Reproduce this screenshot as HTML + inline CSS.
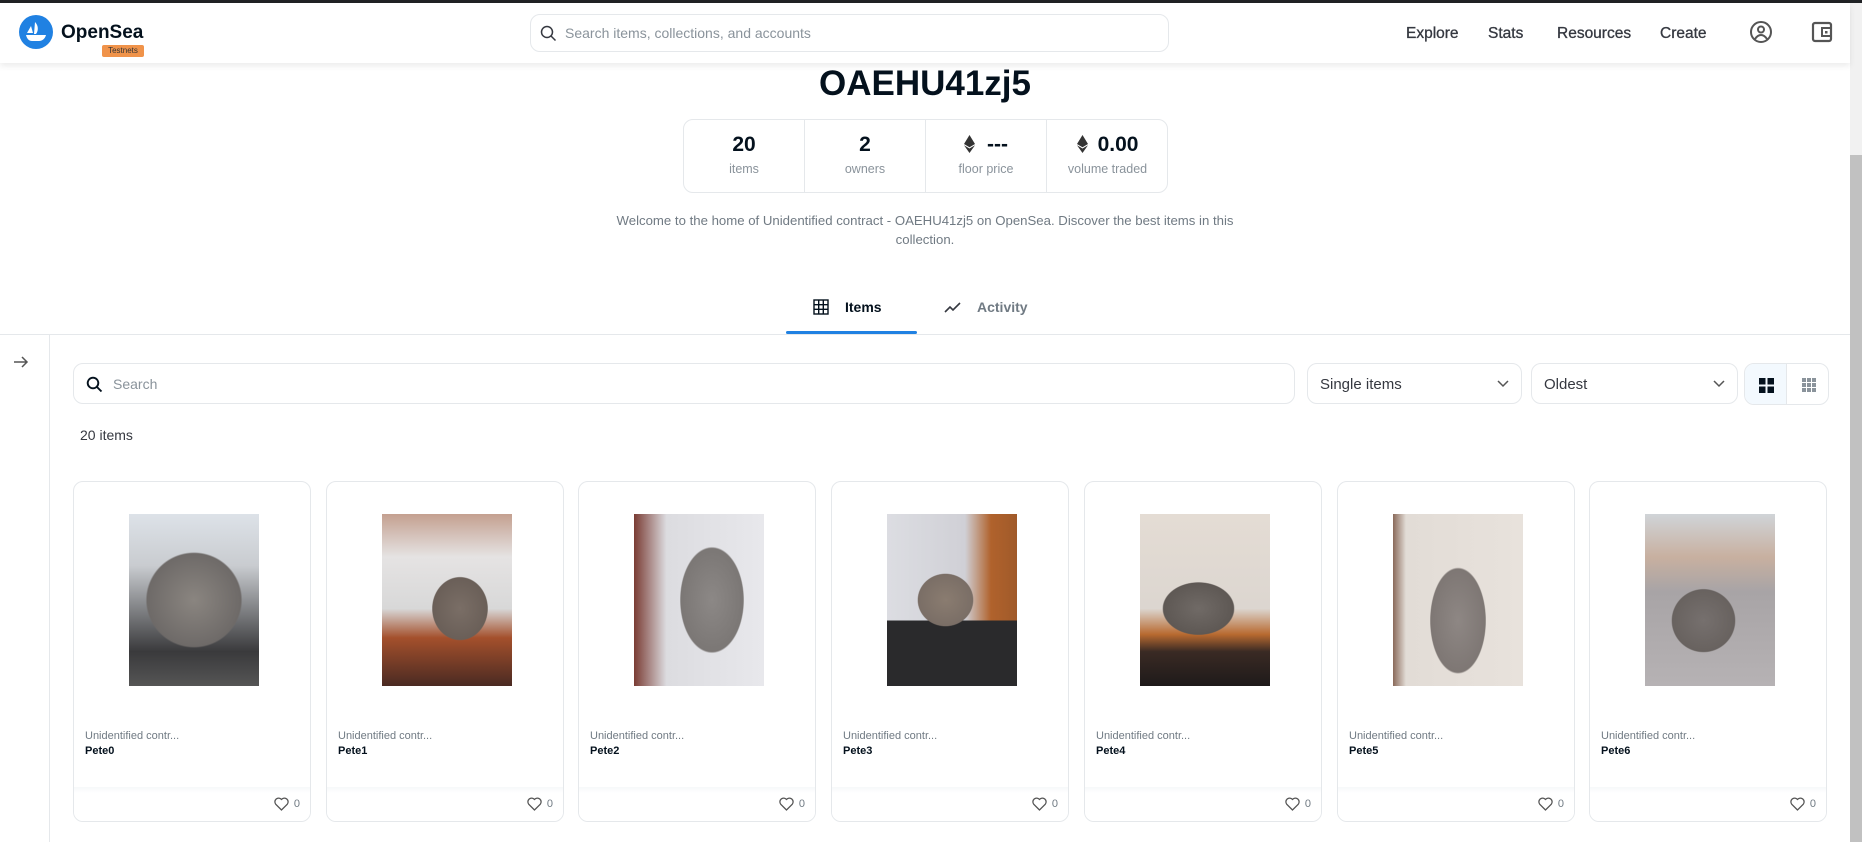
<!DOCTYPE html>
<html><head><meta charset="utf-8">
<style>
*{box-sizing:border-box;margin:0;padding:0}
body{width:1862px;height:842px;overflow:hidden;background:#fff;font-family:"Liberation Sans",sans-serif;color:#04111d;position:relative}
.abs{position:absolute}
#topbar{left:0;top:0;width:1862px;height:3px;background:#202225}
#header{left:0;top:3px;width:1850px;height:60px;background:#fff;box-shadow:0 3px 6px rgba(0,0,0,.08);z-index:2}
.nav{font-size:15.5px;color:#353840;top:22px;-webkit-text-stroke:0.3px #353840}
#scroll{left:1850px;top:3px;width:12px;height:839px;background:#f1f1f1}
#thumb{left:1850px;top:155px;width:12px;height:687px;background:#c1c1c1}
.stat{position:absolute;top:0;width:121px;height:73px;text-align:center;border-right:1px solid #e5e8eb}
.stat b{display:block;font-size:21px;margin-top:13px;color:#04111d}
.stat span{display:block;font-size:12.5px;color:#8a939b;margin-top:5px}
.card{position:absolute;top:481px;width:238px;height:341px;border:1px solid #e5e8eb;border-radius:10px;overflow:hidden;background:#fff}
.card .img{position:absolute;left:55px;top:32px;width:130px;height:172px}
.card .c{position:absolute;left:11px;top:248px;font-size:11px;color:#707a83}
.card .n{position:absolute;left:11px;top:263px;font-size:11px;font-weight:bold;color:#04111d}
.card .f{position:absolute;left:0;top:305px;width:100%;height:36px;background:linear-gradient(#f6f8f9,#fff 6px)}
.card .h{position:absolute;right:10px;top:10px;font-size:11px;color:#707a83;display:flex;align-items:center;gap:5px}
.sel{position:absolute;top:363px;height:41px;border:1px solid #e5e8eb;border-radius:10px;font-size:15px;color:#353840;padding:12px 12px}
</style></head><body>
<div id="topbar" class="abs"></div>
<div id="header" class="abs">
  <svg class="abs" style="left:19px;top:12px" width="34" height="34" viewBox="0 0 34 34"><circle cx="17" cy="17" r="17" fill="#2081e2"/><path d="M8 18l4-7 2 7z" fill="#fff"/><path d="M16 7c3 3 4 8 1 12h-2z" fill="#fff"/><path d="M7 20h20c-1 4-4 6-7 6h-7c-3 0-5-2-6-6z" fill="#fff"/></svg>
  <div class="abs" style="left:61px;top:19px;font-size:19px;font-weight:bold;color:#04111d">OpenSea</div>
  <div class="abs" style="left:102px;top:42px;width:42px;height:12px;background:#f0934a;border-radius:2px;font-size:8px;color:#333;text-align:center;line-height:12px">Testnets</div>
  <div class="abs" style="left:530px;top:11px;width:639px;height:38px;border:1px solid #e5e8eb;border-radius:10px">
    <svg class="abs" style="left:9px;top:10px" width="17" height="17" viewBox="0 0 17 17"><circle cx="7" cy="7" r="5.5" fill="none" stroke="#353840" stroke-width="1.5"/><path d="M11 11l4.5 4.5" stroke="#353840" stroke-width="1.5"/></svg>
    <div class="abs" style="left:34px;top:10px;font-size:14px;color:#8a939b">Search items, collections, and accounts</div>
  </div>
  <div class="abs nav" style="left:1406px">Explore</div>
  <div class="abs nav" style="left:1488px">Stats</div>
  <div class="abs nav" style="left:1557px">Resources</div>
  <div class="abs nav" style="left:1660px">Create</div>
  <svg class="abs" style="left:1749px;top:17px" width="24" height="24" viewBox="0 0 24 24"><circle cx="12" cy="12" r="10" fill="none" stroke="#555" stroke-width="2"/><circle cx="12" cy="9.5" r="3" fill="none" stroke="#555" stroke-width="2"/><path d="M6 19c2-3 4-4 6-4s4 1 6 4" fill="none" stroke="#555" stroke-width="2"/></svg>
  <svg class="abs" style="left:1811px;top:18px" width="22" height="22" viewBox="0 0 22 22"><rect x="2" y="2" width="18" height="18" rx="2" fill="none" stroke="#555" stroke-width="2.2"/><rect x="11" y="7" width="9" height="8" fill="none" stroke="#555" stroke-width="2"/><rect x="14" y="10" width="2.5" height="2.5" fill="#555"/></svg>
</div>
<div id="scroll" class="abs"></div><div id="thumb" class="abs"></div>

<div class="abs" style="left:0;top:64px;width:1850px;text-align:center;font-size:35px;font-weight:bold;color:#04111d">OAEHU41zj5</div>
<div class="abs" style="left:683px;top:119px;width:485px;height:74px;border:1px solid #e5e8eb;border-radius:10px;overflow:hidden">
  <div class="stat" style="left:0"><b>20</b><span>items</span></div>
  <div class="stat" style="left:121px"><b>2</b><span>owners</span></div>
  <div class="stat" style="left:242px"><b><svg width="11" height="18" viewBox="0 0 11 18" style="vertical-align:-2px;margin-right:12px"><path d="M5.5 0L0 9l5.5 3.3L11 9z" fill="#333"/><path d="M0 10.2l5.5 7.8 5.5-7.8-5.5 3.3z" fill="#333"/></svg>---</b><span>floor price</span></div>
  <div class="stat" style="left:363px;border-right:0"><b><svg width="11" height="18" viewBox="0 0 11 18" style="vertical-align:-2px;margin-right:10px"><path d="M5.5 0L0 9l5.5 3.3L11 9z" fill="#333"/><path d="M0 10.2l5.5 7.8 5.5-7.8-5.5 3.3z" fill="#333"/></svg>0.00</b><span>volume traded</span></div>
</div>
<div class="abs" style="left:610px;top:211px;width:630px;text-align:center;font-size:13.2px;line-height:19px;color:#707a83">Welcome to the home of Unidentified contract - OAEHU41zj5 on OpenSea. Discover the best items in this collection.</div>

<svg class="abs" style="left:813px;top:299px" width="16" height="16" viewBox="0 0 16 16" fill="none" stroke="#04111d" stroke-width="1.4"><rect x="1" y="1" width="14" height="14"/><path d="M5.7 1v14M10.3 1v14M1 5.7h14M1 10.3h14"/></svg>
<div class="abs" style="left:845px;top:299px;font-size:14px;font-weight:bold;color:#04111d">Items</div>
<svg class="abs" style="left:944px;top:301px" width="18" height="12" viewBox="0 0 18 12" fill="none" stroke="#353840" stroke-width="1.6"><path d="M1 11l5-5 3 3 7-7"/></svg>
<div class="abs" style="left:977px;top:299px;font-size:14px;font-weight:bold;color:#707a83">Activity</div>
<div class="abs" style="left:786px;top:331px;width:131px;height:3px;background:#2081e2;border-radius:2px"></div>
<div class="abs" style="left:0;top:334px;width:1850px;height:1px;background:#e5e8eb"></div>
<div class="abs" style="left:49px;top:335px;width:1px;height:507px;background:#e5e8eb"></div>
<svg class="abs" style="left:13px;top:355px" width="16" height="14" viewBox="0 0 16 14" fill="none" stroke="#555" stroke-width="1.5"><path d="M1 7h13M9 2l5 5-5 5"/></svg>

<div class="abs" style="left:73px;top:363px;width:1222px;height:41px;border:1px solid #e5e8eb;border-radius:10px">
  <svg class="abs" style="left:12px;top:12px" width="17" height="17" viewBox="0 0 17 17"><circle cx="7" cy="7" r="5.3" fill="none" stroke="#04111d" stroke-width="1.9"/><path d="M11 11l4.5 4.5" stroke="#04111d" stroke-width="1.9"/></svg>
  <div class="abs" style="left:39px;top:12px;font-size:14px;color:#8a939b">Search</div>
</div>
<div class="sel" style="left:1307px;width:215px">Single items<svg class="abs" style="right:12px;top:16px" width="12" height="8" viewBox="0 0 12 8" fill="none" stroke="#555" stroke-width="1.5"><path d="M1 1l5 5 5-5"/></svg></div>
<div class="sel" style="left:1531px;width:207px">Oldest<svg class="abs" style="right:12px;top:16px" width="12" height="8" viewBox="0 0 12 8" fill="none" stroke="#555" stroke-width="1.5"><path d="M1 1l5 5 5-5"/></svg></div>
<div class="abs" style="left:1744px;top:363px;width:85px;height:42px;border:1px solid #e5e8eb;border-radius:10px;overflow:hidden">
  <div class="abs" style="left:0;top:0;width:42px;height:42px;background:#f3f9fe;border-right:1px solid #e5e8eb"></div>
  <svg class="abs" style="left:14px;top:14px" width="15" height="15" viewBox="0 0 15 15" fill="#04111d"><rect width="6.5" height="6.5"/><rect x="8.5" width="6.5" height="6.5"/><rect y="8.5" width="6.5" height="6.5"/><rect x="8.5" y="8.5" width="6.5" height="6.5"/></svg>
  <svg class="abs" style="left:57px;top:14px" width="14" height="14" viewBox="0 0 14 14" fill="#8a939b"><rect width="4" height="4"/><rect x="5" width="4" height="4"/><rect x="10" width="4" height="4"/><rect y="5" width="4" height="4"/><rect x="5" y="5" width="4" height="4"/><rect x="10" y="5" width="4" height="4"/><rect y="10" width="4" height="4"/><rect x="5" y="10" width="4" height="4"/><rect x="10" y="10" width="4" height="4"/></svg>
</div>
<div class="abs" style="left:80px;top:427px;font-size:14px;color:#353840">20 items</div>

<div class="card" style="left:73px"><div class="img" style="background:radial-gradient(ellipse 60% 45% at 50% 50%,#8a8580 0%,#6e6a68 60%,transparent 62%),linear-gradient(#dde2e8 0%,#c9ccd0 30%,#3a3a3c 80%,#555 100%)"></div><div class="c">Unidentified contr...</div><div class="n">Pete0</div><div class="f"><div class="h"><svg width="15" height="14" viewBox="0 0 15 14"><path d="M7.5 13L1.8 7.3A3.4 3.4 0 0 1 7.5 2.4a3.4 3.4 0 0 1 5.7 4.9z" fill="none" stroke="#555" stroke-width="1.3"/></svg><span>0</span></div></div></div>
<div class="card" style="left:326px"><div class="img" style="background:radial-gradient(ellipse 35% 30% at 60% 55%,#7a6e66 0%,#6a5f58 60%,transparent 62%),linear-gradient(#c4a090 0%,#e5e3e3 25%,#d8d8d8 55%,#a4502c 72%,#4a2a22 100%)"></div><div class="c">Unidentified contr...</div><div class="n">Pete1</div><div class="f"><div class="h"><svg width="15" height="14" viewBox="0 0 15 14"><path d="M7.5 13L1.8 7.3A3.4 3.4 0 0 1 7.5 2.4a3.4 3.4 0 0 1 5.7 4.9z" fill="none" stroke="#555" stroke-width="1.3"/></svg><span>0</span></div></div></div>
<div class="card" style="left:578px"><div class="img" style="background:radial-gradient(ellipse 40% 50% at 60% 50%,#8c8886 0%,#7b7775 60%,transparent 62%),linear-gradient(90deg,#7a3c34 0%,#dcdce0 25%,#e8e8ec 100%)"></div><div class="c">Unidentified contr...</div><div class="n">Pete2</div><div class="f"><div class="h"><svg width="15" height="14" viewBox="0 0 15 14"><path d="M7.5 13L1.8 7.3A3.4 3.4 0 0 1 7.5 2.4a3.4 3.4 0 0 1 5.7 4.9z" fill="none" stroke="#555" stroke-width="1.3"/></svg><span>0</span></div></div></div>
<div class="card" style="left:831px"><div class="img" style="background:radial-gradient(ellipse 35% 25% at 45% 50%,#8a7c70 0%,#7a6e66 60%,transparent 62%),linear-gradient(180deg,transparent 62%,#2a2a2c 62%),linear-gradient(90deg,#dcdde2 0%,#d0d0d6 60%,#b0622c 80%,#a05a2a 100%)"></div><div class="c">Unidentified contr...</div><div class="n">Pete3</div><div class="f"><div class="h"><svg width="15" height="14" viewBox="0 0 15 14"><path d="M7.5 13L1.8 7.3A3.4 3.4 0 0 1 7.5 2.4a3.4 3.4 0 0 1 5.7 4.9z" fill="none" stroke="#555" stroke-width="1.3"/></svg><span>0</span></div></div></div>
<div class="card" style="left:1084px"><div class="img" style="background:radial-gradient(ellipse 45% 25% at 45% 55%,#706a66 0%,#5e5854 60%,transparent 62%),linear-gradient(#e4dcd4 0%,#dcd6d0 55%,#b86a30 70%,#3a2a24 80%,#1e1a1a 100%)"></div><div class="c">Unidentified contr...</div><div class="n">Pete4</div><div class="f"><div class="h"><svg width="15" height="14" viewBox="0 0 15 14"><path d="M7.5 13L1.8 7.3A3.4 3.4 0 0 1 7.5 2.4a3.4 3.4 0 0 1 5.7 4.9z" fill="none" stroke="#555" stroke-width="1.3"/></svg><span>0</span></div></div></div>
<div class="card" style="left:1337px"><div class="img" style="background:radial-gradient(ellipse 35% 50% at 50% 62%,#8e8784 0%,#7e7774 60%,transparent 62%),linear-gradient(90deg,#8a6a5a 0%,#e2dcd6 10%,#e8e2dc 100%)"></div><div class="c">Unidentified contr...</div><div class="n">Pete5</div><div class="f"><div class="h"><svg width="15" height="14" viewBox="0 0 15 14"><path d="M7.5 13L1.8 7.3A3.4 3.4 0 0 1 7.5 2.4a3.4 3.4 0 0 1 5.7 4.9z" fill="none" stroke="#555" stroke-width="1.3"/></svg><span>0</span></div></div></div>
<div class="card" style="left:1589px"><div class="img" style="background:radial-gradient(ellipse 40% 30% at 45% 62%,#76706e 0%,#68625f 60%,transparent 62%),linear-gradient(#d0d4d8 0%,#c8b0a0 25%,#a8a4a6 45%,#b6b2b4 100%)"></div><div class="c">Unidentified contr...</div><div class="n">Pete6</div><div class="f"><div class="h"><svg width="15" height="14" viewBox="0 0 15 14"><path d="M7.5 13L1.8 7.3A3.4 3.4 0 0 1 7.5 2.4a3.4 3.4 0 0 1 5.7 4.9z" fill="none" stroke="#555" stroke-width="1.3"/></svg><span>0</span></div></div></div>
</body></html>
